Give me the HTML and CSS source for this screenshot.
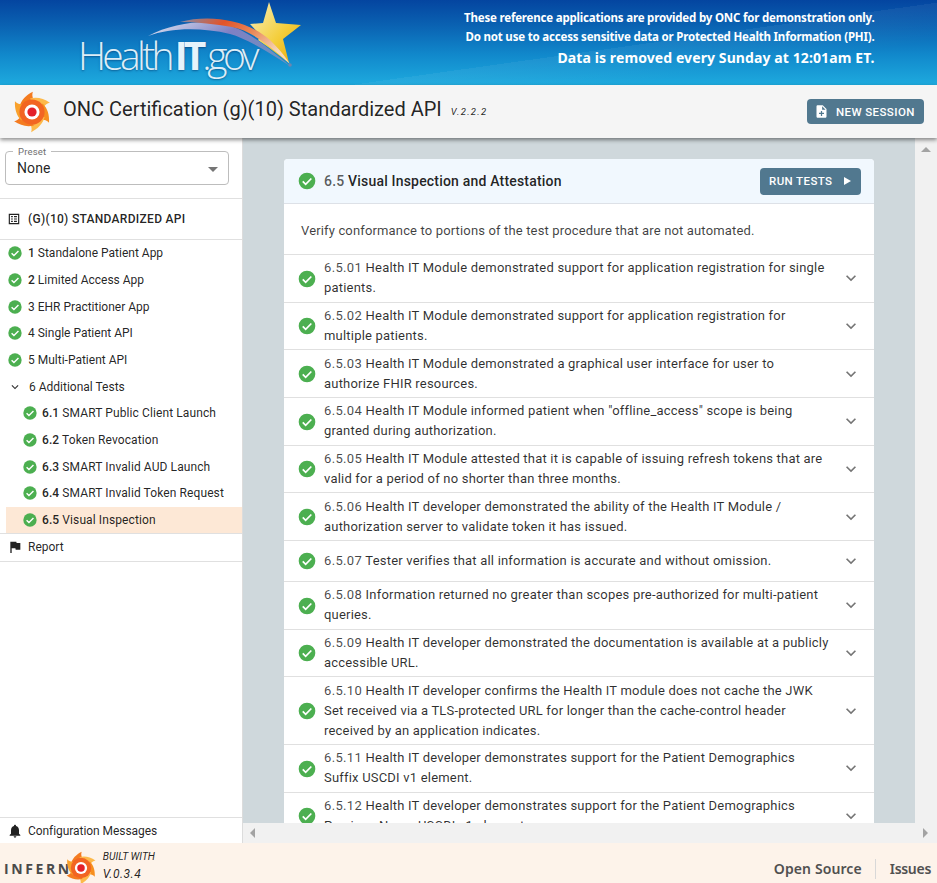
FILE: index.html
```html
<!DOCTYPE html>
<html lang="en">
<head>
<meta charset="utf-8">
<title>ONC Certification (g)(10) Standardized API</title>
<link rel="stylesheet" href="styles.css">
</head>
<body>
<svg class="defs" width="0" height="0" aria-hidden="true">
  <defs>
    <symbol id="ok" viewBox="0 0 24 24"><circle cx="12" cy="12" r="10" fill="#4caf50"/><path d="M6.9 12.4l3.5 3.5 6.8-6.9" fill="none" stroke="#fff" stroke-width="2.1"/></symbol>
    <symbol id="chev" viewBox="0 0 24 24"><path d="M16.59 8.59 12 13.17 7.41 8.59 6 10l6 6 6-6z"/></symbol>
    <path id="blade" d="M10 19C12 11 18 5 26 1 24 7 27 13 35 20z"/>
    <symbol id="swirl" viewBox="0 0 50 50">
      <use href="#blade" fill="#f47b20"/>
      <use href="#blade" fill="#fdb94a" transform="rotate(60 25 25)"/>
      <use href="#blade" fill="#f78f1e" transform="rotate(120 25 25)"/>
      <use href="#blade" fill="#fdb94a" transform="rotate(180 25 25)"/>
      <use href="#blade" fill="#f47b20" transform="rotate(240 25 25)"/>
      <use href="#blade" fill="#f9a12c" transform="rotate(300 25 25)"/>
      <circle cx="25" cy="25" r="15" fill="#f26522"/>
      <circle cx="25" cy="25" r="9" fill="#fff"/>
      <circle cx="25" cy="25" r="5.5" fill="#e3202a"/>
    </symbol>
  </defs>
</svg>

<header class="banner">
  <div class="logo">
    <svg class="logo-art" viewBox="0 0 170 80" aria-hidden="true">
      <defs>
        <linearGradient id="arc1" x1="0" y1="0" x2="1" y2="0.5"><stop offset="0" stop-color="#7f8fb0"/><stop offset=".35" stop-color="#e2532a"/><stop offset=".65" stop-color="#e98a5a"/><stop offset="1" stop-color="#f6d9bc"/></linearGradient>
        <linearGradient id="arc2" x1="0" y1="0" x2="1" y2="0.5"><stop offset="0" stop-color="#dfe7f4"/><stop offset=".55" stop-color="#7f80c4"/><stop offset="1" stop-color="#6d8fc0"/></linearGradient>
        <linearGradient id="stargrad" x1="0" y1="0" x2="1" y2="1"><stop offset="0" stop-color="#f7efc0"/><stop offset=".55" stop-color="#f4cf3e"/><stop offset="1" stop-color="#e9a800"/></linearGradient>
      </defs>
      <path d="M129 2 136 23 161 25 143 39 149 63 128 47 118 40 121 36 110 24 123 23z" fill="url(#stargrad)"/>
      <path d="M8 36C30 24 60 20 80 23 105 28 125 45 150 66 125 50 105 38 90 34 60 27 30 28 8 36z" fill="url(#arc2)"/>
      <path d="M40 22C70 14 108 20 130 40 142 52 146 58 150 64 130 46 110 30 92 27 75 24 58 22 40 22z" fill="url(#arc1)"/>
      <circle cx="150" cy="65" r="1.8" fill="#6d86b0"/>
    </svg>
    <span class="logo-text"><span class="thin">Health</span><b>IT</b><span class="thin gov">.gov</span></span>
  </div>
  <div class="notice">
    <p>These reference applications are provided by ONC for demonstration only.</p>
    <p>Do not use to access sensitive data or Protected Health Information (PHI).</p>
    <p class="notice-big">Data is removed every Sunday at 12:01am ET.</p>
  </div>
</header>

<div class="titlebar">
  <svg class="title-icon"><use href="#swirl"/></svg>
  <h1 class="title">ONC Certification (g)(10) Standardized API</h1>
  <span class="version">V.2.2.2</span>
  <button class="btn btn-new">
    <svg class="btn-doc" viewBox="0 0 24 24"><path fill-rule="evenodd" d="M14 2H6C4.9 2 4 2.9 4 4v16c0 1.1.9 2 2 2h12c1.1 0 2-.9 2-2V8zm2 14h-3v3h-2v-3H8v-2h3v-3h2v3h3zM13 9V3.5L18.5 9z" fill="#fff"/></svg>
    NEW SESSION
  </button>
</div>

<div class="workspace">
  <nav class="sidebar">
    <div class="preset">
      <div class="select">
        <span class="select-label">Preset</span>
        <span class="select-value">None</span>
        <span class="select-caret"></span>
      </div>
    </div>
    <div class="suite-head">
      <svg class="suite-icon" viewBox="0 0 24 24"><path d="M3 3h18v18H3zm2 2v14h14V5zm2 2h3v2H7zm5 0h5v2h-5zm-5 4h3v2H7zm5 0h5v2h-5zm-5 4h3v2H7zm5 0h5v2h-5z" fill="#222" fill-rule="evenodd"/></svg>
      <span>(G)(10) STANDARDIZED API</span>
    </div>
    <ul class="tree">
      <li class="tree-row"><svg class="tree-ok"><use href="#ok"/></svg><span><b>1</b> Standalone Patient App</span></li>
      <li class="tree-row"><svg class="tree-ok"><use href="#ok"/></svg><span><b>2</b> Limited Access App</span></li>
      <li class="tree-row"><svg class="tree-ok"><use href="#ok"/></svg><span>3 EHR Practitioner App</span></li>
      <li class="tree-row"><svg class="tree-ok"><use href="#ok"/></svg><span>4 Single Patient API</span></li>
      <li class="tree-row"><svg class="tree-ok"><use href="#ok"/></svg><span>5 Multi-Patient API</span></li>
      <li class="tree-row"><svg class="tree-chev"><use href="#chev"/></svg><span>6 Additional Tests</span></li>
      <li class="tree-row tree-sub"><svg class="tree-ok"><use href="#ok"/></svg><span><b>6.1</b> SMART Public Client Launch</span></li>
      <li class="tree-row tree-sub"><svg class="tree-ok"><use href="#ok"/></svg><span><b>6.2</b> Token Revocation</span></li>
      <li class="tree-row tree-sub"><svg class="tree-ok"><use href="#ok"/></svg><span><b>6.3</b> SMART Invalid AUD Launch</span></li>
      <li class="tree-row tree-sub"><svg class="tree-ok"><use href="#ok"/></svg><span><b>6.4</b> SMART Invalid Token Request</span></li>
      <li class="tree-row tree-sub tree-active"><svg class="tree-ok"><use href="#ok"/></svg><span><b>6.5</b> Visual Inspection</span></li>
    </ul>
    <div class="report">
      <svg class="report-icon" viewBox="0 0 24 24"><path d="M14.4 6 14 4H5v17h2v-7h5.6l.4 2h7V6z" fill="#222"/></svg>
      <span>Report</span>
    </div>
    <div class="side-spacer"></div>
    <div class="config">
      <svg class="report-icon" viewBox="0 0 24 24"><path d="M12 22c1.1 0 2-.9 2-2h-4c0 1.1.9 2 2 2zm6-6v-5c0-3.07-1.63-5.64-4.5-6.32V4c0-.83-.67-1.5-1.5-1.5s-1.5.67-1.5 1.5v.68C7.64 5.36 6 7.92 6 11v5l-2 2v1h16v-1z" fill="#222"/></svg>
      <span>Configuration Messages</span>
    </div>
  </nav>

  <div class="main-wrap">
    <div class="main-top">
      <main class="main">
        <section class="card">
          <div class="card-head">
            <svg class="ok"><use href="#ok"/></svg>
            <h2 class="card-title"><span class="num">6.5</span> Visual Inspection and Attestation</h2>
            <button class="btn btn-run">RUN TESTS <span class="play"></span></button>
          </div>
          <p class="card-desc">Verify conformance to portions of the test procedure that are not automated.</p>
          <div class="row"><svg class="ok"><use href="#ok"/></svg><p class="row-text"><span class="num">6.5.01</span> Health IT Module demonstrated support for application registration for single patients.</p><svg class="chev"><use href="#chev"/></svg></div>
          <div class="row"><svg class="ok"><use href="#ok"/></svg><p class="row-text"><span class="num">6.5.02</span> Health IT Module demonstrated support for application registration for multiple patients.</p><svg class="chev"><use href="#chev"/></svg></div>
          <div class="row"><svg class="ok"><use href="#ok"/></svg><p class="row-text"><span class="num">6.5.03</span> Health IT Module demonstrated a graphical user interface for user to authorize FHIR resources.</p><svg class="chev"><use href="#chev"/></svg></div>
          <div class="row"><svg class="ok"><use href="#ok"/></svg><p class="row-text"><span class="num">6.5.04</span> Health IT Module informed patient when "offline_access" scope is being granted during authorization.</p><svg class="chev"><use href="#chev"/></svg></div>
          <div class="row"><svg class="ok"><use href="#ok"/></svg><p class="row-text"><span class="num">6.5.05</span> Health IT Module attested that it is capable of issuing refresh tokens that are valid for a period of no shorter than three months.</p><svg class="chev"><use href="#chev"/></svg></div>
          <div class="row"><svg class="ok"><use href="#ok"/></svg><p class="row-text"><span class="num">6.5.06</span> Health IT developer demonstrated the ability of the Health IT Module / authorization server to validate token it has issued.</p><svg class="chev"><use href="#chev"/></svg></div>
          <div class="row"><svg class="ok"><use href="#ok"/></svg><p class="row-text"><span class="num">6.5.07</span> Tester verifies that all information is accurate and without omission.</p><svg class="chev"><use href="#chev"/></svg></div>
          <div class="row"><svg class="ok"><use href="#ok"/></svg><p class="row-text"><span class="num">6.5.08</span> Information returned no greater than scopes pre-authorized for multi-patient queries.</p><svg class="chev"><use href="#chev"/></svg></div>
          <div class="row"><svg class="ok"><use href="#ok"/></svg><p class="row-text"><span class="num">6.5.09</span> Health IT developer demonstrated the documentation is available at a publicly accessible URL.</p><svg class="chev"><use href="#chev"/></svg></div>
          <div class="row"><svg class="ok"><use href="#ok"/></svg><p class="row-text"><span class="num">6.5.10</span> Health IT developer confirms the Health IT module does not cache the JWK Set received via a TLS-protected URL for longer than the cache-control header received by an application indicates.</p><svg class="chev"><use href="#chev"/></svg></div>
          <div class="row"><svg class="ok"><use href="#ok"/></svg><p class="row-text"><span class="num">6.5.11</span> Health IT developer demonstrates support for the Patient Demographics Suffix USCDI v1 element.</p><svg class="chev"><use href="#chev"/></svg></div>
          <div class="row"><svg class="ok"><use href="#ok"/></svg><p class="row-text"><span class="num">6.5.12</span> Health IT developer demonstrates support for the Patient Demographics Previous Name USCDI v1 element.</p><svg class="chev"><use href="#chev"/></svg></div>
        </section>
      </main>
      <div class="vbar"><span class="arrow-up"></span></div>
    </div>
    <div class="hbar"><span class="arrow-left"></span><span class="arrow-right"></span></div>
  </div>
</div>

<footer class="footer">
  <div class="brand">
    <span class="brand-name">INFERN</span>
    <svg class="brand-icon"><use href="#swirl"/></svg>
    <div class="built"><span class="built-with">BUILT WITH</span><span class="built-ver">V.0.3.4</span></div>
  </div>
  <div class="links">
    <a class="link link-first">Open Source</a>
    <a class="link link-last">Issues</a>
  </div>
</footer>
</body>
</html>
```
FILE: styles.css
```css
* { box-sizing: border-box; }
html, body { height: 100%; }
body {
  margin: 0;
  height: 883px;
  overflow: hidden;
  display: flex;
  flex-direction: column;
  font-family: Roboto, "Liberation Sans", sans-serif;
  color: rgba(0,0,0,.87);
  background: #fff;
}
p, h1, h2, ul { margin: 0; padding: 0; }
.defs { position: absolute; }

/* Banner */
.banner {
  flex: 0 0 85px;
  display: flex;
  justify-content: space-between;
  position: relative;
  overflow: hidden;
  background:
    linear-gradient(172deg, rgba(255,255,255,0) 62%, rgba(255,255,255,.05) 62%, rgba(255,255,255,0) 80%),
    linear-gradient(180deg, #0445a0 0%, #0a62b2 30%, #1189cc 65%, #1eaade 100%);
}
.logo { position: relative; width: 400px; }
.logo-art { position: absolute; left: 140px; top: 0; width: 170px; height: 80px; }
.logo-text {
  position: absolute;
  left: 78px;
  top: 32px;
  font-family: "Open Sans", sans-serif;
  font-size: 39px;
  line-height: 46px;
  letter-spacing: -3.7px;
  color: #dcedf7;
  white-space: nowrap;
  text-shadow: 0 1px 2px rgba(0,40,90,.5);
}
.logo-text .thin { font-weight: 300; }
.logo-text .gov { letter-spacing: -4.4px; }
.logo-text b { font-weight: 700; color: #e6f3fb; letter-spacing: -4px; margin-left: 4px; }
.notice {
  padding: 8px 62.5px 0 0;
  text-align: right;
  color: #fff;
  font-family: "Noto Sans", sans-serif;
  font-weight: 700;
  font-size: 11.5px;
  letter-spacing: -.19px;
  line-height: 19px;
}
.notice-big { font-size: 14px; letter-spacing: .1px; line-height: 24px; }

/* Title bar */
.titlebar {
  flex: 0 0 53px;
  display: flex;
  align-items: center;
  padding: 0 13px 0 11px;
  background: #f5f5f5;
  position: relative;
  z-index: 2;
  box-shadow: 0 2px 4px rgba(0,0,0,.45);
}
.title-icon { width: 42px; height: 42px; margin-right: 10px; flex: none; }
.title { font-size: 20px; font-weight: 400; color: rgba(0,0,0,.87); white-space: nowrap; margin-bottom: 6px; }
.version { font-size: 9.5px; font-style: italic; letter-spacing: 1.3px; margin: 0 0 0 9px; }
.btn {
  display: inline-flex;
  align-items: center;
  border: 0;
  border-radius: 4px;
  background: #51788f;
  color: #fff;
  font-family: inherit;
  font-weight: 500;
  font-size: 11.5px;
  letter-spacing: .4px;
}
.btn-new { margin-left: auto; height: 25px; width: 117px; padding: 0 0 0 6.5px; }
.btn-doc { width: 15px; height: 15px; margin-right: 7.5px; }

/* Workspace */
.workspace { flex: 1 1 auto; display: flex; min-height: 0; }
.sidebar {
  flex: 0 0 243px;
  display: flex;
  flex-direction: column;
  background: #fff;
  border-right: 1px solid #dcdcdc;
  font-size: 12px;
}
.preset { height: 61px; padding: 13px 13px 0 5px; border-bottom: 1px solid #e0e0e0; }
.select {
  position: relative;
  height: 34px;
  border: 1px solid #bdbdbd;
  border-radius: 4px;
  display: flex;
  align-items: center;
  padding-left: 11px;
}
.select-label {
  position: absolute;
  left: 7px;
  top: -6px;
  padding: 0 5px;
  background: #fff;
  font-size: 9.5px;
  line-height: 11px;
  color: #6f6f6f;
  letter-spacing: .2px;
}
.select-value { font-size: 14px; letter-spacing: .1px; }
.select-caret {
  position: absolute;
  right: 10px;
  top: 15px;
  border-left: 5px solid transparent;
  border-right: 5px solid transparent;
  border-top: 5px solid #757575;
}
.suite-head {
  height: 41px;
  display: flex;
  align-items: center;
  padding-left: 7px;
  border-bottom: 1px solid #e0e0e0;
  font-weight: 500;
  font-size: 12px;
  letter-spacing: .3px;
}
.suite-icon { width: 14px; height: 14px; margin-right: 7px; }
.tree { list-style: none; }
.tree-row {
  height: 26.67px;
  display: flex;
  align-items: center;
  padding-left: 6.5px;
  color: rgba(0,0,0,.87);
}
.tree-row b { font-weight: 500; }
.tree-ok { width: 16px; height: 16px; flex: none; margin-right: 5.5px; }
.tree-chev { width: 14px; height: 14px; flex: none; margin: 0 7.5px 0 1px; fill: #333; }
.tree-sub { margin-left: 6px; padding-left: 15.5px; letter-spacing: .1px; }
.tree-sub .tree-ok { margin-right: 4.5px; }
.tree-active { background: #fde8d6; }
.report {
  height: 29px;
  display: flex;
  align-items: center;
  padding: 0 0 1px 7px;
  border-top: 1px solid #e0e0e0;
  border-bottom: 1px solid #e0e0e0;
}
.report-icon { width: 16px; height: 16px; margin-right: 5px; flex: none; }
.side-spacer { flex: 1; }
.config {
  height: 26px;
  display: flex;
  align-items: center;
  padding-left: 7px;
  border-top: 1px solid #e0e0e0;
  letter-spacing: -.06px;
}

/* Main */
.main-wrap { flex: 1 1 auto; display: flex; flex-direction: column; min-width: 0; }
.main-top { flex: 1 1 auto; display: flex; min-height: 0; }
.main {
  flex: 1 1 auto;
  background: #cfd8dc;
  padding: 21px 41px 0;
  overflow: hidden;
}
.vbar { flex: 0 0 22px; background: #f1f1f1; position: relative; }
.arrow-up {
  position: absolute; top: 9px; left: 6px;
  border-left: 5px solid transparent; border-right: 5px solid transparent;
  border-bottom: 5px solid #a3a3a3;
}
.hbar { flex: 0 0 20px; background: #f1f1f1; display: flex; justify-content: space-between; align-items: center; padding: 0 9px 0 7px; }
.arrow-left { border-top: 5px solid transparent; border-bottom: 5px solid transparent; border-right: 5px solid #a3a3a3; }
.arrow-right { border-top: 5px solid transparent; border-bottom: 5px solid transparent; border-left: 5px solid #a3a3a3; }

.card { background: #fff; border-radius: 4px 4px 0 0; font-size: 13px; line-height: 20px; letter-spacing: .2px; }
.card-head {
  height: 45px;
  display: flex;
  align-items: center;
  padding: 0 13px 0 13px;
  background: #f1f8fe;
  border-bottom: 1px solid #dde1e7;
  border-radius: 4px 4px 0 0;
}
.ok { width: 20px; height: 20px; flex: none; margin-right: 7px; }
.card-title { font-size: 14px; font-weight: 500; letter-spacing: .19px; }
.num { color: rgba(0,0,0,.72); letter-spacing: .35px; }
.card-title .num { color: rgba(0,0,0,.65); letter-spacing: .19px; }
.btn-run { margin-left: auto; height: 27px; width: 101px; padding: 0 0 0 9px; font-size: 11.5px; }
.play {
  margin-left: 12px;
  border-top: 4.5px solid transparent; border-bottom: 4.5px solid transparent; border-left: 7px solid #fff;
}
.card-desc { height: 50px; padding: 17px 17px 0; color: rgba(0,0,0,.75); letter-spacing: .15px; }
.row {
  display: flex;
  align-items: center;
  min-height: 41px;
  padding: 3.33px 13px 3.33px 13px;
  border-top: 1px solid #e0e0e0;
}
.row .ok { margin-top: 1px; }
.row-text { flex: 1; padding: 0 11px 0 0; color: rgba(0,0,0,.82); }
.chev { width: 20px; height: 20px; flex: none; fill: #757575; }

/* Footer */
.footer {
  flex: 0 0 40px;
  min-height: 0;
  display: flex;
  justify-content: space-between;
  align-items: center;
  background: #fdf3ea;
  overflow: hidden;
}
.brand { display: flex; align-items: center; padding: 10px 0 0 4px; height: 40px; }
.brand-name { font-family: "Open Sans", sans-serif; font-weight: 700; font-size: 14px; letter-spacing: 2.6px; color: #4a4a4a; }
.brand-icon { width: 34px; height: 34px; margin: 0 0 0 -8px; flex: none; }
.built { display: flex; flex-direction: column; font-style: italic; margin: -2px 0 0 5px; }
.built-with { font-size: 10.3px; line-height: 13px; }
.built-ver { font-size: 12px; line-height: 22px; letter-spacing: .5px; }
.links { display: flex; align-items: center; padding: 11px 6px 0 0; }
.link { font-family: "Noto Sans", sans-serif; font-weight: 600; font-size: 14px; color: #505050; padding-left: 14px; }
.link-first { padding: 0 13px 0 0; border-right: 1px solid #d8d8d8; line-height: 20px; letter-spacing: .1px; }
.link-last { letter-spacing: -.3px; }
```
